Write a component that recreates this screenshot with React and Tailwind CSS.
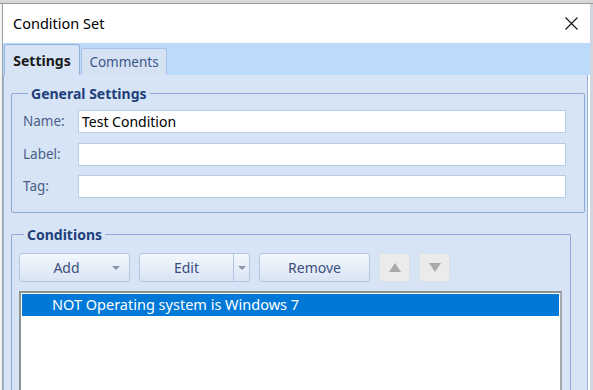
const font = { fontFamily: '"Noto Sans", "Open Sans", sans-serif' };

function Field({ label, value }) {
  return (
    <div className="flex items-center h-[23px]">
      <span className="w-[55px] text-[13.5px] text-[#4a5f86]">{label}</span>
      <div className="flex-1 mr-[18px] h-[23px] bg-white border border-[#b8cbe6] px-[3px] flex items-center text-[14px] text-black">
        {value}
      </div>
    </div>
  );
}

function Caret() {
  return <span className="inline-block w-0 h-0 border-l-[4px] border-r-[4px] border-t-[4px] border-l-transparent border-r-transparent border-t-[#8a96a8]" />;
}

function Button({ children, className = "" }) {
  return (
    <div
      className={`h-[29px] rounded-[3px] border border-[#b3c6e2] bg-gradient-to-b from-[#f3f7fd] via-[#e6eef9] to-[#d9e4f4] text-[14px] text-[#3b4f7c] flex items-center ${className}`}
    >
      {children}
    </div>
  );
}

export default function App() {
  return (
    <div className="w-[593px] h-[390px] overflow-hidden bg-[#e4e4e4] flex flex-col" style={font}>
      <div className="h-[4px] bg-[#d8d8d8] border-b border-[#9a9a9a]" />
      <div className="flex flex-1 min-h-0">
        <div className="w-[3px] bg-[#f2f2f2] border-r border-[#a0a0a0]" />
        <div className="flex-1 flex flex-col bg-white min-w-0">
          <div className="h-[39px] flex items-center justify-between pl-[10px] pr-[12px] shrink-0">
            <span className="text-[14.5px] text-black">Condition Set</span>
            <svg width="13" height="13" viewBox="0 0 13 13">
              <path d="M0.5 0.5 L12.5 12.5 M12.5 0.5 L0.5 12.5" stroke="#111" strokeWidth="1.1" />
            </svg>
          </div>
          <div className="h-[32px] bg-[#bcdafc] flex items-end pl-[1px] shrink-0">
            <div className="h-[31px] w-[76px] bg-[#d6e4f5] border border-b-0 border-[#95b2dc] rounded-t-[3px] flex items-center justify-center text-[14px] font-bold text-[#1a1a1a]">
              Settings
            </div>
            <div className="h-[27px] w-[86px] ml-[1px] bg-[#d4e2f4] border border-b-0 border-[#a9c1e3] rounded-t-[3px] flex items-center justify-center text-[13.5px] text-[#3d5588]">
              Comments
            </div>
          </div>
          <div className="flex-1 bg-[#d6e4f5] border-x border-[#95b2dc] mr-[2px] pl-[7px] pr-[2px] pt-[8px] flex flex-col">
            <fieldset className="border border-[#8eaad8] rounded-[2px] pl-[11px] pb-[14px] pt-[6px] flex flex-col gap-[9.5px] mb-[11px]">
              <legend className="ml-[5px] px-[3px] text-[14px] font-bold text-[#213f7c]">General Settings</legend>
              <Field label="Name:" value="Test Condition" />
              <Field label="Label:" value="" />
              <Field label="Tag:" value="" />
            </fieldset>
            <fieldset className="flex-1 border border-b-0 border-[#8eaad8] rounded-t-[2px] mr-[14px] pl-[7px] pr-[8px] pt-[8px]">
              <legend className="ml-[5px] px-[3px] text-[14px] font-bold text-[#213f7c]">Conditions</legend>
              <div className="flex items-center gap-[9px]">
                <Button className="w-[111px] relative justify-center">
                  <span className="mr-[16px]">Add</span>
                  <span className="absolute right-[9px] top-[12px] flex"><Caret /></span>
                </Button>
                <Button className="w-[111px]">
                  <span className="flex-1 text-center">Edit</span>
                  <span className="w-[16px] h-full border-l border-[#b3c6e2] flex items-center justify-center"><Caret /></span>
                </Button>
                <Button className="w-[111px] justify-center">Remove</Button>
                <div className="w-[31px] h-[29px] rounded-[3px] border border-[#d8e0ea] bg-[#ebebeb] flex items-center justify-center">
                  <span className="w-0 h-0 border-l-[6px] border-r-[6px] border-b-[9px] border-l-transparent border-r-transparent border-b-[#a9a9a9]" />
                </div>
                <div className="w-[31px] h-[29px] rounded-[3px] border border-[#d8e0ea] bg-[#ebebeb] flex items-center justify-center">
                  <span className="w-0 h-0 border-l-[6px] border-r-[6px] border-t-[9px] border-l-transparent border-r-transparent border-t-[#a9a9a9]" />
                </div>
              </div>
              <div className="mt-[9px] h-[120px] bg-white border-2 border-b-0 border-[#8e9296] border-r-[#a5a8ad] p-[1px]">
                <div className="h-[22px] bg-[#0078d7] text-white text-[14.5px] pl-[30px] flex items-center">
                  NOT Operating system is Windows 7
                </div>
              </div>
            </fieldset>
          </div>
        </div>
        <div className="w-[3px] bg-[#cfd6e0]" />
      </div>
    </div>
  );
}
